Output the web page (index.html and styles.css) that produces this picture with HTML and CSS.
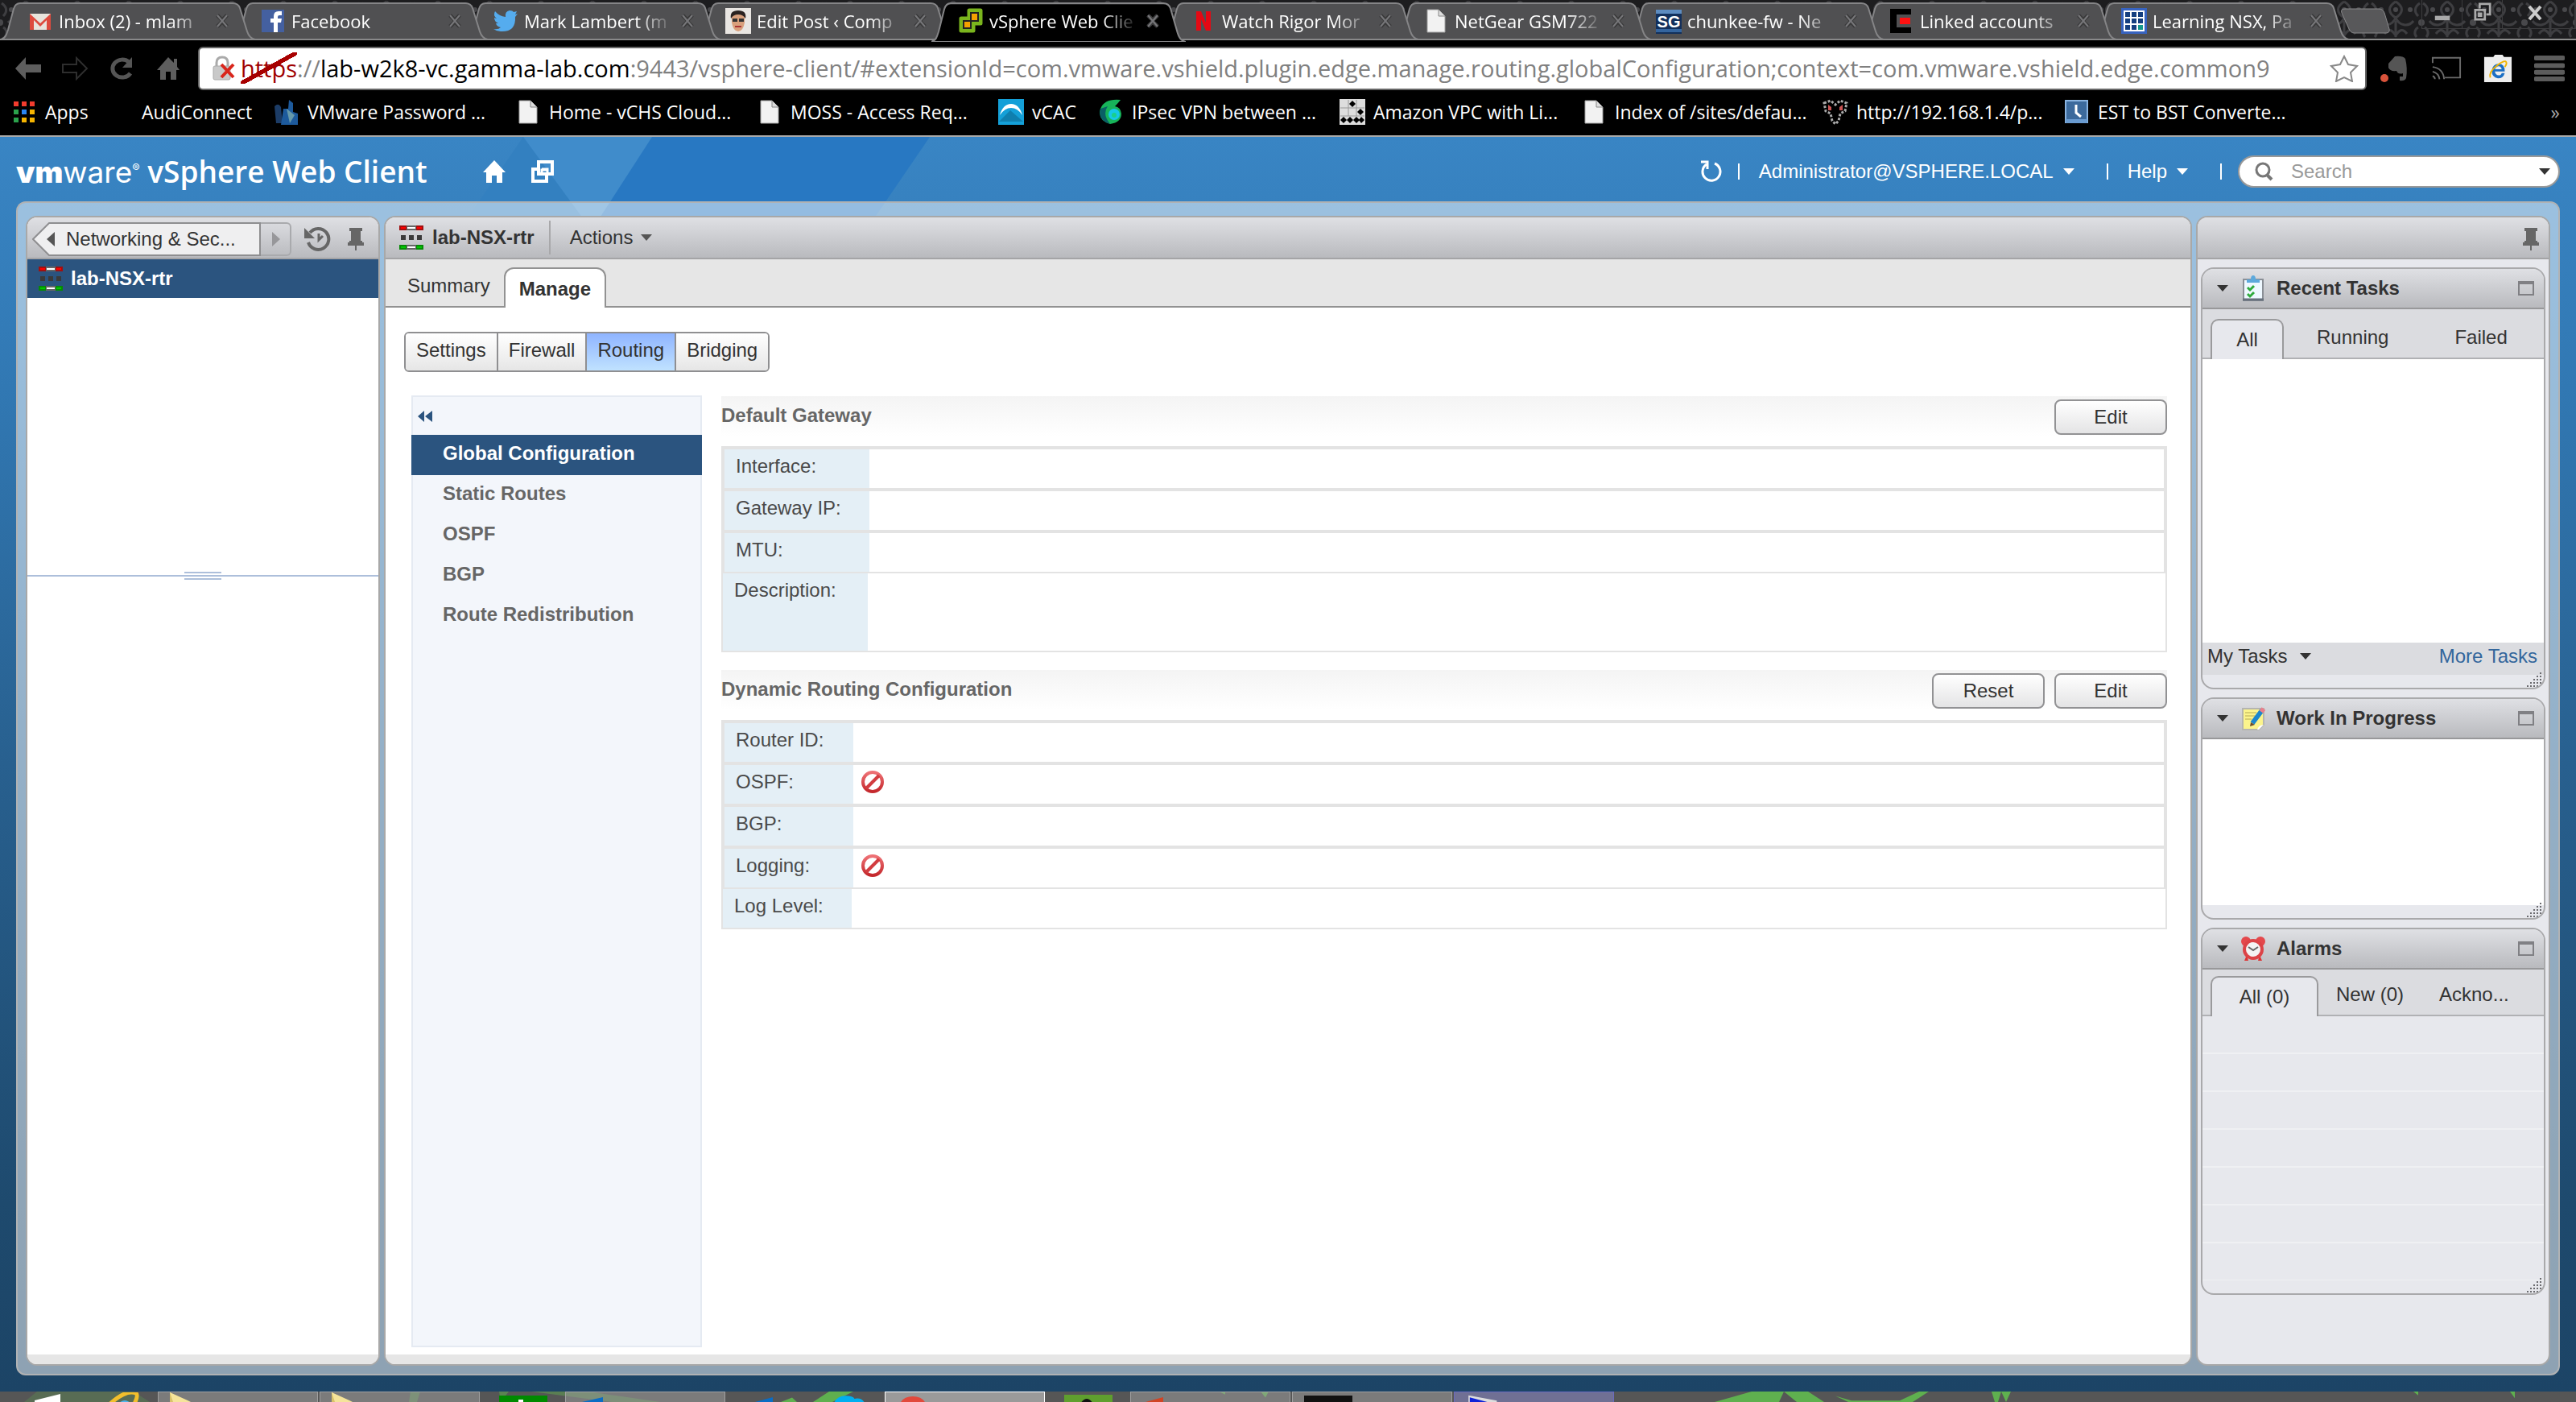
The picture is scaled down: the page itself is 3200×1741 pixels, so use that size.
FILE: index.html
```html
<!DOCTYPE html>
<html lang="en">
<head>
    <meta charset="UTF-8">
    <meta name="viewport" content="width=device-width, initial-scale=1.0">
    <title>vSphere Web Client</title>
    <link rel="stylesheet" href="styles.css">
</head>
<body>
    <!-- shared icons -->
    <svg class="sprite" width="0" height="0" aria-hidden="true">
        <defs>
            <linearGradient id="noGrad" x1="0" y1="0" x2="0" y2="1">
                <stop offset="0" stop-color="#ee7175"/>
                <stop offset="1" stop-color="#c4282c"/>
            </linearGradient>
            <pattern id="damask" width="64" height="48" patternUnits="userSpaceOnUse">
                <rect width="64" height="48" fill="#1d1d1f"/>
                <g fill="none" stroke="#3e3e41" stroke-width="3">
                    <path d="M32 2c10 6 10 14 0 20c-10-6-10-14 0-20M32 22c-4 10-16 12-22 4M32 22c4 10 16 12 22 4M32 26v20M18 42c6-8 10-4 14 2c4-6 8-10 14-2"/>
                    <path d="M2 4c6 4 8 10 2 16M62 4c-6 4-8 10-2 16M4 34c4 2 6 8 2 12M60 34c-4 2-6 8-2 12"/>
                </g>
                <g fill="#48484b"><circle cx="32" cy="12" r="3"/><circle cx="14" cy="12" r="3"/><circle cx="50" cy="12" r="3"/><circle cx="0" cy="28" r="4"/><circle cx="64" cy="28" r="4"/></g>
            </pattern>
        </defs>
        <symbol id="tab-shape" viewBox="0 0 316 46" preserveAspectRatio="none">
            <path d="M0 46C6 44 7 40 9 34L16 8Q18 1 24 1H288Q295 1 297 7L306 36Q309 45 316 46Z"/>
        </symbol>
        <symbol id="close" viewBox="0 0 18 18"><path d="M3 2L9 8L15 2M3 16L9 10L15 16M9 8v2" fill="none" stroke="#3a3a3b" stroke-width="5"/><path d="M3 2L15 16M15 2L3 16" stroke="#77777a" stroke-width="2"/></symbol>
        <symbol id="page" viewBox="0 0 32 32"><path d="M5 2h14l8 8v20H5z" fill="#f2f2f2" stroke="#a0a0a0"/><path d="M19 2v8h8" fill="#ddd" stroke="#888"/></symbol>
        <symbol id="caret" viewBox="0 0 14 10"><path d="M0 1h14L7 9z" fill="currentColor"/></symbol>
        <symbol id="pin" viewBox="0 0 20 28"><path d="M2 0h16v4h-2v12h2v2h2v4H0v-4h2v-2h2V4H2z"/><path d="M9 22h2v6H9z"/></symbol>
        <symbol id="router" viewBox="0 0 30 30">
            <path d="M0 0h30v6H0z" fill="#a01010"/><path d="M2 2h6v2H2zM22 2h6v2h-6z" fill="#f00"/><path d="M9 0h12v6H9z" fill="#666"/><path d="M10 2h10v2H10z" fill="#fff"/>
            <path d="M2 12h6v6H2zM12 12h6v6h-6zM22 12h6v6h-6z" fill="#3a3a3a"/>
            <path d="M0 24h30v6H0z" fill="#078a07"/><path d="M2 26h6v2H2zM22 26h6v2h-6z" fill="#0c0"/><path d="M9 24h12v6H9z" fill="#666"/><path d="M10 26h10v2H10z" fill="#fff"/>
        </symbol>
        <symbol id="maximize" viewBox="0 0 20 18"><path d="M0 0h20v18H0zM2 4v12h16V4z" fill="#808084" fill-rule="evenodd"/></symbol>
        <symbol id="disabled" viewBox="0 0 28 28"><circle cx="14" cy="14" r="12" fill="#fff" stroke="url(#noGrad)" stroke-width="4"/><path d="M6 22L22 6" stroke="#d23c40" stroke-width="4"/></symbol>
        <symbol id="grip" viewBox="0 0 20 20"><path d="M18 2v2M14 6v2M18 6v2M10 10v2M14 10v2M18 10v2M6 14v2M10 14v2M14 14v2M18 14v2M2 18v2M6 18v2M10 18v2M14 18v2M18 18v2" stroke="#6a6a6e" stroke-width="2"/></symbol>
        <symbol id="folder" viewBox="0 0 40 14"><path d="M0 0l22 10l16 8v6H0z" fill="#f5e49a"/><path d="M0 0v24h8z" fill="#d9c26a"/></symbol>
    </svg>

    <!-- browser tabs -->
    <div class="tab-strip">
        <svg class="damask" aria-hidden="true"><rect width="100%" height="100%" fill="url(#damask)"/></svg>
        <nav class="tabs" aria-label="Browser tabs">
            <a class="tab" href="#"><svg class="shape"><use href="#tab-shape"/></svg>
                <svg class="fav" viewBox="0 0 32 32"><path d="M3 7h26v20H3z" fill="#e8e4dc"/><path d="M3 27V7l13 12L29 7v20h-5V15l-8 8l-8-8v12z" fill="#dd4b3e"/></svg>
                <span class="label">Inbox (2) - mlam</span><svg class="x"><use href="#close"/></svg></a>
            <a class="tab" href="#"><svg class="shape"><use href="#tab-shape"/></svg>
                <svg class="fav" viewBox="0 0 32 32"><path d="M2 2h28v28H2z" fill="#4460a0"/><path d="M17 30V18h-4v-5h4v-3q0-6 6-6h4v5h-3q-2 0-2 2v2h5l-1 5h-4v12z" fill="#fff"/></svg>
                <span class="label">Facebook</span><svg class="x"><use href="#close"/></svg></a>
            <a class="tab" href="#"><svg class="shape"><use href="#tab-shape"/></svg>
                <svg class="fav" viewBox="0 0 32 32"><path d="M1 26q6 1 9-2q-5-1-6-5h3q-5-2-5-7l3 1Q0 9 3 4q5 6 13 7q-1-7 5-8q4 0 5 2l4-1l-2 4l3-1l-3 4Q29 30 10 29q-5 0-9-3" fill="#55acee"/></svg>
                <span class="label">Mark Lambert (m</span><svg class="x"><use href="#close"/></svg></a>
            <a class="tab" href="#"><svg class="shape"><use href="#tab-shape"/></svg>
                <svg class="fav" viewBox="0 0 32 32"><path d="M0 0h32v32H0z" fill="#e9e6e2"/><path d="M8 8q8-8 16 0v10q-2 11-8 11T8 18z" fill="#d9a07c"/><path d="M7 13Q5 3 16 3t9 10q-3-5-9-5t-9 5" fill="#2a2220"/><path d="M9 13h6v4H9zM17 13h6v4h-6z" fill="#333"/><path d="M12 23h8" stroke="#a33" stroke-width="2"/></svg>
                <span class="label">Edit Post ‹ Comp</span><svg class="x"><use href="#close"/></svg></a>
            <a class="tab active" href="#" aria-current="page"><svg class="shape"><use href="#tab-shape"/></svg>
                <svg class="fav" viewBox="0 0 32 32"><path d="M14 3h14v16h-9v9H4V13h10z" fill="none" stroke="#7ab51d" stroke-width="5" stroke-linejoin="round"/><path d="M15 5h11v12H15zM6 15h11v11H6z" fill="#222"/><path d="M17 7h7v8h-7zM8 17h7v7H8z" fill="#f5a100"/></svg>
                <span class="label">vSphere Web Clie</span><svg class="x"><use href="#close"/></svg></a>
            <a class="tab" href="#"><svg class="shape"><use href="#tab-shape"/></svg>
                <svg class="fav" viewBox="0 0 32 32"><path d="M7 4h6l6 14V4h6v24h-6l-6-14v14H7z" fill="#e50914"/></svg>
                <span class="label">Watch Rigor Mor</span><svg class="x"><use href="#close"/></svg></a>
            <a class="tab" href="#"><svg class="shape"><use href="#tab-shape"/></svg>
                <svg class="fav"><use href="#page"/></svg>
                <span class="label">NetGear GSM722</span><svg class="x"><use href="#close"/></svg></a>
            <a class="tab" href="#"><svg class="shape"><use href="#tab-shape"/></svg>
                <svg class="fav" viewBox="0 0 32 32"><path d="M0 2h32v30H0z" fill="#12305c"/><path d="M0 2h32v5H0z" fill="#5d8cc0"/><path d="M0 26h32v4H0z" fill="#34659f"/><text x="16" y="24" class="fav-text">SG</text></svg>
                <span class="label">chunkee-fw - Ne</span><svg class="x"><use href="#close"/></svg></a>
            <a class="tab" href="#"><svg class="shape"><use href="#tab-shape"/></svg>
                <svg class="fav" viewBox="0 0 32 32"><path d="M2 1h26v7H10v16h18v7H2z" fill="#000"/><path d="M14 12h13v8H14z" fill="#f11"/></svg>
                <span class="label">Linked accounts</span><svg class="x"><use href="#close"/></svg></a>
            <a class="tab" href="#"><svg class="shape"><use href="#tab-shape"/></svg>
                <svg class="fav" viewBox="0 0 32 32"><path d="M0 0h32v32H0z" fill="#3763c0"/><path d="M3 3h26v26H3z" fill="#fff"/><path d="M5 5h6v6H5zM13 5h6v6h-6zM21 5h6v6h-6zM5 13h6v6H5zM13 13h6v6h-6zM21 13h6v6h-6zM5 21h6v6H5zM13 21h6v6h-6z" fill="#153f80"/><path d="M21 21h6v6h-6z" fill="#159a8c"/></svg>
                <span class="label">Learning NSX, Pa</span><svg class="x"><use href="#close"/></svg></a>
        </nav>
        <button class="new-tab" aria-label="New tab"><svg viewBox="0 0 62 32"><path d="M6 1h42q5 0 7 5l6 20q1 5-4 5H18q-5 0-7-5L2 6q-2-5 4-5z" fill="#58585a" stroke="#8a8a8c"/></svg></button>
        <div class="window-controls">
            <button aria-label="Minimize"><svg viewBox="0 0 22 26"><path d="M1 18h20v6H1z" fill="#aaa"/></svg></button>
            <button aria-label="Restore"><svg viewBox="0 0 24 26"><path d="M8 8V2h14v14h-5M2 10h13v13H2zM7 15h3v3H7z" fill="none" stroke="#aaa" stroke-width="3"/></svg></button>
            <button class="wide" aria-label="Close"><svg viewBox="0 0 18 20"><path d="M2 2l14 16M16 2L2 18" stroke="#ccc" stroke-width="4"/></svg></button>
        </div>
    </div>

    <!-- address bar -->
    <div class="toolbar">
        <div class="nav-buttons">
            <button aria-label="Back"><svg viewBox="0 0 34 30"><path d="M14 1L1 15l13 14v-9h19V10H14z" fill="#5e5e5e"/></svg></button>
            <button aria-label="Forward"><svg viewBox="0 0 34 30"><path d="M19 2l13 13l-13 13v-8H2V10h17z" fill="none" stroke="#2e2e2e" stroke-width="2"/></svg></button>
            <button aria-label="Reload"><svg viewBox="0 0 30 30"><path d="M24 7A12 11 0 1 0 26 21" fill="none" stroke="#555" stroke-width="5"/><path d="M28 1v13H16z" fill="#555"/></svg></button>
            <button aria-label="Home"><svg viewBox="0 0 30 30"><path d="M15 1L1 17h4v12h7V19h6v10h7V17h4l-3-4V3h-4v5z" fill="#5e5e5e"/></svg></button>
        </div>
        <div class="omnibox">
            <svg class="lock" viewBox="0 0 32 32"><path d="M7 14V9q0-7 7-7t7 7v5" fill="none" stroke="#aaa" stroke-width="3"/><rect x="3" y="13" width="21" height="17" rx="2" fill="#c9c9c9" stroke="#aaa"/><path d="M13 11l15 16M28 11L13 27" stroke="#d9261c" stroke-width="4"/></svg>
            <div class="url" role="textbox" aria-label="Address" contenteditable="true" spellcheck="false"><span class="scheme">https</span>://<span class="host">lab-w2k8-vc.gamma-lab.com</span>:9443/vsphere-client/#extensionId=com.vmware.vshield.plugin.edge.manage.routing.globalConfiguration;context=com.vmware.vshield.edge.common9</div>
            <button class="star" aria-label="Bookmark this page"><svg viewBox="0 0 36 34"><path d="M18 2l5 10l11 2l-8 8l2 11l-10-5l-10 5l2-11l-8-8l11-2z" fill="#fff" stroke="#888" stroke-width="2"/></svg></button>
        </div>
        <div class="extensions">
            <button aria-label="Evernote"><svg viewBox="0 0 36 36"><path d="M10 12l8-9q10-1 13 3q3 12 1 24q-2 4-8 3v-5h4v-4q-6 2-8-3q-8 1-10-4z" fill="#555"/><circle cx="5" cy="30" r="5" fill="#d9533b"/></svg></button>
            <button aria-label="Cast"><svg viewBox="0 0 40 32"><path d="M2 9V2h36v26H18M2 14q14 2 15 16M2 20q8 2 9 10M2 26q3 1 3 4" fill="none" stroke="#6a6a6a" stroke-width="2"/></svg></button>
            <button aria-label="IE Tab"><svg viewBox="0 0 38 38"><path d="M1 4h12l2-3h10l2 3h10v33H1z" fill="#eee"/><path d="M28 23H15q1 5 5 5q3 0 4-3h4q-2 7-9 7q-8-1-8-10q1-9 9-9t8 10zm-4-3q-1-4-4-4t-5 4z" fill="#1c6fc4"/><path d="M9 31q-2-8 9-16t12-4q1 2-2 6" fill="none" stroke="#f0b400" stroke-width="2"/></svg></button>
            <button aria-label="Menu"><svg viewBox="0 0 32 28"><path d="M2 3h28M2 11h28M2 18h28M2 25h28" stroke="#5c5c5c" stroke-width="5" stroke-linecap="round"/></svg></button>
        </div>
    </div>

    <!-- bookmarks -->
    <nav class="bookmarks" aria-label="Bookmarks">
        <a class="apps" href="#"><svg viewBox="0 0 32 32"><path d="M3 3h6v6H3zM13 3h6v6h-6zM23 3h6v6h-6z" fill="#f33c2e"/><path d="M3 13h6v6H3zM3 23h6v6H3z" fill="#2ba24c"/><path d="M13 13h6v6h-6z" fill="#2a86f3"/><path d="M23 13h6v6h-6zM13 23h6v6h-6zM23 23h6v6h-6z" fill="#f5b400"/></svg>Apps</a>
        <a class="audi" href="#"><svg viewBox="0 0 32 32"></svg>AudiConnect</a>
        <a href="#"><svg viewBox="0 0 32 32"><path d="M1 9q5-5 8 1l2 20H3z" fill="#1c3c66"/><path d="M12 12h6l1-11l5 4v11l6 2v14H9z" fill="#1d5a9c"/><path d="M16 12l4 18l6-10z" fill="#69a"/></svg>VMware Password ...</a>
        <a href="#"><svg><use href="#page"/></svg>Home - vCHS Cloud...</a>
        <a href="#"><svg><use href="#page"/></svg>MOSS - Access Req...</a>
        <a class="short" href="#"><svg viewBox="0 0 32 32"><path d="M0 0h32v32H0z" fill="#14a0d8"/><path d="M2 20Q6 6 16 6t14 14q-6-9-14-9T2 20" fill="#fff"/><path d="M1 28l14-14l16 14z" fill="#0f7fae"/></svg>vCAC</a>
        <a href="#"><svg viewBox="0 0 32 32"><path d="M28 1Q8-1 3 12q-4 14 12 19q14-2 14-13q-1-8-8-9q4-4 7-8z" fill="#17b45a"/><path d="M3 12q-4 14 12 19q-10-12-3-22z" fill="#0a5f66"/><circle cx="20" cy="19" r="7" fill="#15c8e8"/><circle cx="20" cy="20" r="3" fill="#1ad08a"/></svg>IPsec VPN between ...</a>
        <a href="#"><svg viewBox="0 0 32 32"><path d="M0 0h32v32H0z" fill="#ddd"/><path d="M1 11h30M1 21h30M11 1v20M21 1v20" stroke="#999"/><path d="M12 6l4-4l4 4l-4 4zM22 16l4-4l4 4l-4 4zM1 26l4-4l4 4l-4 4zM9 26l4-4l4 4l-4 4zM17 26l4-4l4 4l-4 4zM24 26l3-4l4 4l-4 4z" fill="#000"/></svg>Amazon VPC with Li...</a>
        <a href="#"><svg><use href="#page"/></svg>Index of /sites/defau...</a>
        <a href="#"><svg viewBox="0 0 32 32"><path d="M2 5l8-3l6 5l6-5l8 3l-2 10l-6 3l-2 9l-4 4l-4-4l-2-9l-6-3z" fill="none" stroke="#aaa" stroke-width="3" stroke-dasharray="3 2"/><path d="M7 7l4 3v4H7zM25 7l-4 3v4h4z" fill="#c55"/></svg>http://192.168.1.4/p...</a>
        <a href="#"><svg viewBox="0 0 32 32"><path d="M2 2h27v27H2z" fill="#3c6a9c" stroke="#8ab4e0" stroke-width="2"/><path d="M2 25h27v5H2z" fill="#6a9bd0"/><path d="M15 7v10l6 5" fill="none" stroke="#fff" stroke-width="3"/></svg>EST to BST Converte...</a>
        <button class="overflow" aria-label="More bookmarks">»</button>
    </nav>

    <!-- web client -->
    <div class="client">
        <svg class="facets" viewBox="0 0 1160 120" aria-hidden="true">
            <path d="M810 0H1155L1073 120H590L650 0z" fill="#2878c2"/>
            <path d="M650 0L568 120H743L650 0z" fill="#3380c0"/>
            <path d="M650 0H810L735 116z" fill="#408ccb"/>
        </svg>
        <header class="client-header">
            <h1 class="brand"><span class="vm"><b>vm</b>ware<sup>®</sup></span> vSphere Web Client</h1>
            <button class="hicon home" aria-label="Home"><svg viewBox="0 0 28 28"><path d="M14 0L0 15h4v13h7v-9h6v9h7V15h4z"/></svg></button>
            <button class="hicon" aria-label="Navigator"><svg viewBox="0 0 28 28"><path d="M9 2h17v15H9zM19 17v9H2V11h7" fill="none" stroke="#fff" stroke-width="4"/><path d="M13 18v-6h7M13 11l7 0v6" fill="none" stroke="#fff" stroke-width="3"/></svg></button>
            <div class="user-menu">
                <button class="hicon refresh" aria-label="Refresh"><svg viewBox="0 0 28 28"><path d="M9 5A11 11 0 1 0 19 4" fill="none" stroke="#fff" stroke-width="3"/><path d="M2 2h8v9" fill="none" stroke="#fff" stroke-width="3"/></svg></button>
                <span class="bar"></span>
                <button>Administrator@VSPHERE.LOCAL<svg class="caret"><use href="#caret"/></svg></button>
                <span class="bar"></span>
                <button>Help<svg class="caret"><use href="#caret"/></svg></button>
                <span class="bar"></span>
                <label class="search">
                    <svg class="lens" viewBox="0 0 24 24"><circle cx="11" cy="10" r="8" fill="none" stroke="#777" stroke-width="3"/><path d="M16 16l6 6" stroke="#777" stroke-width="4"/></svg>
                    <input type="text" placeholder="Search" aria-label="Search">
                    <svg class="caret"><use href="#caret"/></svg>
                </label>
            </div>
        </header>

        <div class="workspace">
            <aside class="panel navigator">
                <div class="panel-head">
                    <div class="crumbs">
                        <button class="crumb">
                            <svg class="crumb-shape" viewBox="0 0 284 40" preserveAspectRatio="none"><path d="M21 1H283V39H21L1 20z" fill="#efeff0" stroke="#8e8e90" stroke-width="2"/></svg>
                            <svg class="back" viewBox="0 0 10 18"><path d="M10 0v18L0 9z" fill="#555"/></svg>
                            <span>Networking &amp; Sec...</span>
                        </button>
                        <button class="crumb-next" aria-label="Forward"><svg viewBox="0 0 10 18"><path d="M0 0v18l10-9z" fill="#97979a"/></svg></button>
                    </div>
                    <button class="tool" aria-label="History"><svg class="history" viewBox="0 0 34 32"><path d="M7 8A13 13 0 1 1 5 20" fill="none" stroke="#666" stroke-width="4"/><path d="M0 2v13h13z" fill="#666"/><path d="M18 9v8l5-5" fill="none" stroke="#666" stroke-width="3"/></svg></button>
                    <button class="tool" aria-label="Pin"><svg class="pin"><use href="#pin"/></svg></button>
                </div>
                <a class="nav-item" href="#"><svg class="router"><use href="#router"/></svg>lab-NSX-rtr</a>
                <div class="nav-body"></div>
                <div class="splitter"><span></span></div>
                <div class="nav-lower"></div>
                <div class="panel-foot"></div>
            </aside>

            <main class="panel detail">
                <div class="panel-head">
                    <svg class="router"><use href="#router"/></svg>
                    <h2>lab-NSX-rtr</h2>
                    <button class="actions">Actions<svg class="caret"><use href="#caret"/></svg></button>
                </div>
                <nav class="object-tabs">
                    <a href="#">Summary</a>
                    <a class="current" href="#" aria-current="page">Manage</a>
                </nav>
                <div class="manage">
                    <div class="segments">
                        <button>Settings</button><button>Firewall</button><button class="on">Routing</button><button>Bridging</button>
                    </div>
                    <div class="routing">
                        <nav class="toc">
                            <button class="collapse" aria-label="Collapse"><svg viewBox="0 0 18 14"><path d="M8 0v14L0 7zM18 0v14L9 7z" fill="#2b547f"/></svg></button>
                            <a class="current" href="#">Global Configuration</a>
                            <a href="#">Static Routes</a>
                            <a href="#">OSPF</a>
                            <a href="#">BGP</a>
                            <a href="#">Route Redistribution</a>
                        </nav>
                        <div class="config">
                            <section>
                                <div class="section-head"><h3>Default Gateway</h3><button>Edit</button></div>
                                <table class="props gateway">
                                    <tr><th scope="row">Interface:</th><td></td></tr>
                                    <tr><th scope="row">Gateway IP:</th><td></td></tr>
                                    <tr><th scope="row">MTU:</th><td></td></tr>
                                    <tr class="tall"><th scope="row">Description:</th><td></td></tr>
                                </table>
                            </section>
                            <section>
                                <div class="section-head"><h3>Dynamic Routing Configuration</h3><button>Reset</button><button>Edit</button></div>
                                <table class="props dynamic">
                                    <tr><th scope="row">Router ID:</th><td></td></tr>
                                    <tr><th scope="row">OSPF:</th><td><svg class="disabled" role="img" aria-label="Disabled"><use href="#disabled"/></svg></td></tr>
                                    <tr><th scope="row">BGP:</th><td></td></tr>
                                    <tr><th scope="row">Logging:</th><td><svg class="disabled" role="img" aria-label="Disabled"><use href="#disabled"/></svg></td></tr>
                                    <tr><th scope="row">Log Level:</th><td></td></tr>
                                </table>
                            </section>
                        </div>
                    </div>
                </div>
                <div class="panel-foot"></div>
            </main>

            <aside class="panel sidebar">
                <div class="panel-head"><button class="tool" aria-label="Pin"><svg class="pin"><use href="#pin"/></svg></button></div>
                <div class="portlets">
                    <section class="portlet tasks">
                        <div class="portlet-head">
                            <svg class="caret"><use href="#caret"/></svg>
                            <svg class="pic" viewBox="0 0 30 32"><path d="M3 5h24v26H3z" fill="#eef8ff" stroke="#8a8f96" stroke-width="2"/><path d="M2 30h26" stroke="#66707c" stroke-width="3"/><path d="M7 9V5h5q0-5 3-5t3 5h5v4z" fill="#5da9dc"/><path d="M8 15l3 3l5-5M8 23l3 3l5-5" fill="none" stroke="#2eaa3c" stroke-width="3"/></svg>
                            <h3>Recent Tasks</h3>
                            <button aria-label="Maximize"><svg><use href="#maximize"/></svg></button>
                        </div>
                        <div class="portlet-tabs"><button class="on">All</button><button>Running</button><button>Failed</button></div>
                        <div class="list"></div>
                        <div class="task-filter">
                            <label><select aria-label="Task filter"><option>My Tasks</option></select><svg class="caret"><use href="#caret"/></svg></label>
                            <a href="#">More Tasks</a>
                        </div>
                        <div class="portlet-foot"><svg class="grip"><use href="#grip"/></svg></div>
                    </section>
                    <section class="portlet work">
                        <div class="portlet-head">
                            <svg class="caret"><use href="#caret"/></svg>
                            <svg class="pic" viewBox="0 0 30 32"><path d="M2 4h26v20l-6 6H2z" fill="#fbf48c" stroke="#b5b5b0" stroke-width="2"/><path d="M5 9h14M5 13h12M5 17h8" stroke="#d8cf70" stroke-width="2"/><path d="M14 22l12-16" stroke="#1a86cc" stroke-width="6"/><path d="M25 8l3-4" stroke="#e8808c" stroke-width="6"/><path d="M11 26l1-5l5 3z" fill="#6b4a2a"/><path d="M20 30q2-6 8-6l-6 6z" fill="#fff"/></svg>
                            <h3>Work In Progress</h3>
                            <button aria-label="Maximize"><svg><use href="#maximize"/></svg></button>
                        </div>
                        <div class="list"></div>
                        <div class="portlet-foot"><svg class="grip"><use href="#grip"/></svg></div>
                    </section>
                    <section class="portlet alarms">
                        <div class="portlet-head">
                            <svg class="caret"><use href="#caret"/></svg>
                            <svg class="pic" viewBox="0 0 30 32"><path d="M7 24l-3 7h5zM23 24l3 7h-5z" fill="#d33"/><circle cx="6" cy="7" r="6" fill="#e4484c"/><circle cx="24" cy="7" r="6" fill="#e4484c"/><circle cx="15" cy="17" r="11" fill="#f4f4f4" stroke="#dc4347" stroke-width="4"/><path d="M9 14l6 4l6-4" fill="none" stroke="#666" stroke-width="2"/></svg>
                            <h3>Alarms</h3>
                            <button aria-label="Maximize"><svg><use href="#maximize"/></svg></button>
                        </div>
                        <div class="portlet-tabs"><button class="on">All (0)</button><button>New (0)</button><button>Ackno...</button></div>
                        <div class="list"></div>
                        <div class="portlet-foot"><svg class="grip"><use href="#grip"/></svg></div>
                    </section>
                </div>
            </aside>
        </div>
    </div>

    <!-- top edge of the OS taskbar -->
    <div class="taskbar">
        <svg class="wallpaper" viewBox="0 0 3200 14" preserveAspectRatio="none" aria-hidden="true">
            <g fill="#5fb04f">
                <path d="M30 14l16-14h120l20 14z" opacity=".25"/><path d="M510 0h12l-4 14h-10zM620 0h12l-10 14z" opacity=".5"/>
                <path d="M660 0h70l90 14h-60z" opacity=".45"/><path d="M970 14l14-6l6 6zM1010 14l20-14h30l-26 14z"/>
                <path d="M1514 0h8v4zM1566 0h10l-4 8z"/><path d="M2130 14l46-14h40l-6 14zM2216 0h30l20 14h-34zM2280 6l20 6h60l24-12h12l-20 14h-80z"/>
                <path d="M2474 0h12l-4 14h-4zM2486 0h12l-6 14zM2998 0h6v5zM3118 0h6v9z"/>
            </g>
        </svg>
        <button class="task plain" aria-label="Start"><svg viewBox="0 0 40 14"><path d="M8 10l32-8v12H8z" fill="#fff"/></svg></button>
        <button class="task plain" aria-label="Internet Explorer"><svg viewBox="0 0 40 14"><path d="M4 14Q24-4 36 1q3 3-2 13" fill="none" stroke="#f2bf2c" stroke-width="5"/><path d="M14 14q8-8 16 0z" fill="#4db4ec"/></svg></button>
        <button class="task" aria-label="Folder"><svg><use href="#folder"/></svg></button>
        <button class="task" aria-label="Folder"><svg><use href="#folder"/></svg></button>
        <button class="task plain store" aria-label="Store"><svg viewBox="0 0 60 14"><path d="M0 4h60v10H0z" fill="#008a00"/><path d="M24 9h6v5h-6z" fill="#fff"/></svg></button>
        <button class="task" aria-label="Outlook"><svg viewBox="0 0 40 14"><path d="M6 12l26-6v8H6z" fill="#0a6cc4"/></svg></button>
        <button class="task plain" aria-label="Lync"><svg viewBox="0 0 40 14"><path d="M0 12l22-6v8H0z" fill="#0a6cc4"/></svg></button>
        <button class="task plain" aria-label="Skype"><svg viewBox="0 0 44 14"><path d="M0 14Q4 4 16 4q10 0 12 4q10-2 14 6z" fill="#00aff0"/></svg></button>
        <button class="task lit" aria-label="Chrome"><svg viewBox="0 0 40 14"><path d="M4 14Q8 5 20 5t16 9z" fill="#e2493c"/></svg></button>
        <button class="task plain store" aria-label="Evernote"><svg viewBox="0 0 60 14"><path d="M0 3h60v11H0z" fill="#5f9f2e"/><path d="M20 14q8-12 16 0z" fill="#111"/></svg></button>
        <button class="task" aria-label="PowerPoint"><svg viewBox="0 0 40 14"><path d="M4 12l22-6v8H4z" fill="#d14424"/></svg></button>
        <button class="task" aria-label="Terminal"><svg class="square" viewBox="0 0 60 14"><path d="M0 4h60v10H0z" fill="#111"/></svg></button>
        <button class="task violet" aria-label="Remote desktop"><svg viewBox="0 0 50 14"><path d="M4 3l44 8v3H4z" fill="#ddd"/><path d="M6 6l30 8H6z" fill="#1022d8"/></svg></button>
    </div>
</body>
</html>
```
FILE: styles.css
```css
* {
    margin: 0;
    padding: 0;
    box-sizing: border-box;
}

body {
    display: flex;
    flex-direction: column;
    height: 100vh;
    overflow: hidden;
    background: #000;
    color: #333;
    font-family: "Liberation Sans", Arial, sans-serif;
    font-size: 24px;
    line-height: 28px;
}

button,
input,
select {
    font: inherit;
    color: inherit;
    background: none;
    border: none;
}

button {
    cursor: pointer;
    white-space: nowrap;
}

svg {
    display: block;
    flex: none;
}

a {
    color: inherit;
    text-decoration: none;
}

.sprite {
    position: absolute;
}

.caret {
    width: 14px;
    height: 10px;
}

/* browser tab strip */
.tab-strip,
.toolbar,
.bookmarks {
    font-family: "Open Sans", "Noto Sans", sans-serif;
    color: #fff;
    flex: none;
}

.tab-strip {
    position: relative;
    display: flex;
    height: 50px;
    border-bottom: 2px solid #8d8d8d;
    background: #1d1d1f;
}

.damask {
    position: absolute;
    width: 100%;
    height: 100%;
}

.tabs {
    display: flex;
    padding: 3px 0 0 1px;
}

.tab {
    position: relative;
    display: flex;
    align-items: center;
    width: 316px;
    height: 46px;
    margin-right: -27px;
    padding: 0 32px 0 33px;
    font-size: 22px;
}

.tab .shape {
    position: absolute;
    left: 0;
    top: 0;
    width: 100%;
    height: 100%;
    fill: #505052;
    stroke: #858587;
    stroke-width: 2px;
}

.tab:nth-child(1) { z-index: 10; }
.tab:nth-child(2) { z-index: 9; }
.tab:nth-child(3) { z-index: 8; }
.tab:nth-child(4) { z-index: 7; }
.tab:nth-child(6) { z-index: 5; }
.tab:nth-child(7) { z-index: 4; }
.tab:nth-child(8) { z-index: 3; }
.tab:nth-child(9) { z-index: 2; }
.tab:nth-child(10) { z-index: 1; }

.tab.active {
    z-index: 11;
}

.tab.active .shape {
    height: 49px;
    fill: #000;
}

.tab .fav {
    position: relative;
    width: 32px;
    height: 32px;
}

.fav-text {
    fill: #fff;
    font: bold 20px "Liberation Sans", sans-serif;
    text-anchor: middle;
}

.tab .label {
    position: relative;
    flex: 1;
    margin: 0 8px 0 7px;
    white-space: nowrap;
    -webkit-mask-image: linear-gradient(to right, #000 75%, transparent);
    mask-image: linear-gradient(to right, #000 75%, transparent);
}

.tab .x {
    position: relative;
    width: 18px;
    height: 18px;
}

.new-tab {
    position: relative;
    width: 62px;
    height: 32px;
    margin: 10px 0 0 16px;
}

.window-controls {
    position: relative;
    display: flex;
    height: 36px;
    margin-left: auto;
    border: 1px solid #3c3c3e;
    border-top: none;
}

.window-controls button {
    display: flex;
    justify-content: center;
    width: 50px;
    padding-top: 3px;
    border-right: 1px solid #3c3c3e;
}

.window-controls .wide {
    width: 90px;
    padding: 6px 10px 0 0;
}

.window-controls svg {
    width: 22px;
    height: 24px;
}

.window-controls .wide svg {
    width: 18px;
    height: 20px;
}

/* address bar */
.toolbar {
    display: flex;
    align-items: center;
    gap: 16px;
    height: 70px;
    padding: 0 14px 0 18px;
}

.nav-buttons {
    display: flex;
    gap: 24px;
    margin-right: 4px;
}

.nav-buttons svg {
    width: 34px;
    height: 30px;
}

.omnibox {
    display: flex;
    align-items: center;
    flex: 1;
    min-width: 0;
    height: 54px;
    padding: 0 8px 0 14px;
    border: 2px solid #666;
    border-radius: 6px;
    background: #fff;
}

.lock {
    width: 32px;
    height: 32px;
}

.url {
    flex: 1;
    margin: 0 4px 0 5px;
    overflow: hidden;
    color: #808080;
    font-size: 29px;
    line-height: 44px;
    white-space: nowrap;
    outline: none;
}

.scheme {
    color: #a00000;
    background: linear-gradient(to bottom right, transparent 46%, #a80000 46%, #a80000 54%, transparent 54%);
}

.host {
    color: #000;
}

.star svg {
    width: 36px;
    height: 34px;
}

.extensions {
    display: flex;
    align-items: center;
    gap: 26px;
}

.extensions svg {
    width: 38px;
    height: 36px;
}

/* bookmarks bar */
.bookmarks {
    display: flex;
    align-items: center;
    height: 50px;
    padding: 0 20px 10px 14px;
    border-bottom: 2px solid #aaa;
    font-size: 23px;
}

.bookmarks a {
    display: flex;
    align-items: center;
    gap: 10px;
    width: 300px;
    white-space: nowrap;
}

.bookmarks .apps {
    width: 122px;
}

.bookmarks .audi {
    width: 204px;
    gap: 8px;
}

.bookmarks .short {
    width: 124px;
}

.bookmarks a svg {
    width: 32px;
    height: 32px;
}

.overflow {
    margin-left: auto;
    color: #aaa;
}

/* web client shell */
.client {
    position: relative;
    display: flex;
    flex-direction: column;
    flex: 1;
    min-height: 0;
    padding: 0 20px 20px;
    background: linear-gradient(#3985c4, #3178b3 20%, #28608f 50%, #1e4a6e 85%, #1c4466);
}

.facets {
    position: absolute;
    left: 0;
    top: 0;
    width: 1160px;
    height: 120px;
}

.client-header {
    position: relative;
    display: flex;
    align-items: center;
    height: 80px;
    padding-top: 6px;
    color: #fff;
    flex: none;
}

.brand {
    width: 580px;
    font-family: "Open Sans", "Noto Sans", sans-serif;
    font-size: 37px;
    font-weight: 600;
    line-height: 44px;
    white-space: nowrap;
}

.vm {
    font-family: "Inter", sans-serif;
    font-weight: 400;
}

.vm b {
    font-weight: 900;
}

.vm sup {
    font-size: 14px;
    line-height: 14px;
}

.hicon svg {
    width: 28px;
    height: 28px;
    fill: #fff;
}

.home {
    margin-right: 32px;
}

.user-menu {
    display: flex;
    align-items: center;
    gap: 24px;
    margin-left: auto;
}

.user-menu button {
    display: flex;
    align-items: center;
    gap: 12px;
}

.user-menu .bar {
    width: 2px;
    height: 20px;
    margin-left: 16px;
    background: #fff;
}

.user-menu .refresh + .bar {
    margin-left: -4px;
}

.search {
    display: flex;
    align-items: center;
    gap: 22px;
    width: 400px;
    height: 40px;
    margin-left: -4px;
    padding: 0 10px 0 18px;
    border: 2px solid #999;
    border-radius: 20px;
    background: #fff;
    color: #333;
}

.search .lens {
    width: 24px;
    height: 24px;
}

.search input {
    flex: 1;
    min-width: 0;
    outline: none;
}

.search input::placeholder {
    color: #999;
    opacity: 1;
}

.workspace {
    position: relative;
    display: flex;
    gap: 5px;
    flex: 1;
    min-height: 0;
    padding: 16px 10px 10px;
    border: 2px solid #b0b2b4;
    border-radius: 12px;
    background: rgba(255, 255, 255, 0.5);
}

/* panels */
.panel {
    display: flex;
    flex-direction: column;
    min-height: 0;
    overflow: hidden;
    border: 2px solid #a8a8a8;
    border-radius: 14px;
    background: #fff;
}

.panel-head {
    display: flex;
    align-items: center;
    flex: none;
    height: 52px;
    border-bottom: 2px solid #a4a4a6;
    background: linear-gradient(#dfe0e4, #b9babe);
}

.panel-foot {
    flex: none;
    height: 12px;
    background: #e6e6e6;
}

.router {
    width: 30px;
    height: 30px;
}

.tool {
    padding: 0 10px;
}

.history {
    width: 34px;
    height: 32px;
}

.pin {
    width: 20px;
    height: 28px;
    fill: #666;
}

/* navigator */
.navigator {
    flex: none;
    width: 440px;
}

.navigator .panel-head,
.sidebar .panel-head {
    padding: 4px 8px 0 6px;
}

.crumbs {
    display: flex;
    height: 42px;
    margin-right: auto;
}

.crumb {
    position: relative;
    display: flex;
    align-items: center;
    gap: 14px;
    width: 284px;
    padding-left: 18px;
}

.crumb-shape {
    position: absolute;
    left: 0;
    top: 0;
    width: 100%;
    height: 100%;
}

.crumb .back,
.crumb span {
    position: relative;
}

.back,
.crumb-next svg {
    width: 10px;
    height: 18px;
}

.crumb-next {
    width: 38px;
    padding-left: 14px;
    border: 2px solid #a9aaad;
    border-left: none;
    border-radius: 0 6px 6px 0;
}

.nav-item {
    display: flex;
    align-items: center;
    gap: 10px;
    height: 48px;
    padding-left: 14px;
    background: #2b547f;
    color: #fff;
    font-weight: bold;
}

.nav-body {
    height: 344px;
}

.splitter {
    display: flex;
    align-items: center;
    justify-content: center;
    height: 2px;
    background: #adbfdb;
}

.splitter span {
    width: 46px;
    height: 10px;
    flex: none;
    border: solid #adbfdb;
    border-width: 2px 0;
}

.nav-lower {
    flex: 1;
}

/* detail */
.detail {
    flex: 1;
    min-width: 0;
}

.detail .panel-head {
    padding-left: 17px;
}

.detail h2 {
    margin-left: 11px;
    font-size: 24px;
}

.actions {
    display: flex;
    align-items: center;
    gap: 10px;
    height: 42px;
    margin-left: 18px;
    padding-left: 24px;
    border-left: 2px solid #a8a8aa;
}

.actions .caret {
    color: #555;
}

.object-tabs {
    display: flex;
    align-items: flex-end;
    flex: none;
    height: 60px;
    background: #e6e6e6;
    border-bottom: 2px solid #929292;
}

.object-tabs a {
    padding: 0 17px 11px 27px;
}

.object-tabs .current {
    height: 50px;
    margin-bottom: -2px;
    padding: 11px 17px 0;
    border: 2px solid #929292;
    border-bottom: none;
    border-radius: 12px 12px 0 0;
    background: #fff;
    font-weight: bold;
}

.manage {
    display: flex;
    flex-direction: column;
    flex: 1;
    padding: 30px 29px 9px 23px;
}

.segments {
    display: flex;
    align-self: flex-start;
    height: 50px;
    overflow: hidden;
    border: 2px solid #8f8f91;
    border-radius: 6px;
}

.segments button {
    padding: 0 13px 4px;
    background: linear-gradient(#fff, #e6e6e6);
}

.segments button + button {
    border-left: 2px solid #8f8f91;
}

.segments .on {
    background: linear-gradient(#8fb4ff, #c0e2ff);
}

.routing {
    display: flex;
    gap: 24px;
    flex: 1;
    padding: 29px 0 0 9px;
}

.toc {
    width: 361px;
    flex: none;
    border: 2px solid #e5eaf2;
    background: #f3f6fb;
}

.toc .collapse {
    display: flex;
    align-items: center;
    height: 47px;
    padding-left: 6px;
}

.collapse svg {
    width: 18px;
    height: 14px;
}

.toc a {
    display: block;
    height: 50px;
    margin: 0 -2px;
    padding: 9px 0 0 39px;
    color: #666;
    font-weight: bold;
}

.toc .current {
    background: #2b547f;
    color: #fff;
}

.config {
    flex: 1;
}

.section-head {
    display: flex;
    align-items: flex-start;
    gap: 12px;
    height: 62px;
    margin-top: 1px;
    padding-top: 4px;
    background: linear-gradient(#f4f4f4, #fff 50px);
}

.section-head h3 {
    flex: 1;
    padding-top: 6px;
    color: #666;
    font-size: 24px;
}

.section-head button {
    width: 140px;
    height: 44px;
    border: 2px solid #929294;
    border-radius: 8px;
    background: linear-gradient(#fff, #e4e4e5);
}

.config section + section {
    margin-top: 22px;
}

.props {
    width: 100%;
    border: 2px solid #e3e3e3;
    border-spacing: 0;
}

.props th,
.props td {
    height: 52px;
    border: solid #e3e3e3;
    border-width: 2px 0;
    vertical-align: top;
}

.props th {
    width: 182px;
    padding: 7px 0 0 14px;
    border-left-width: 2px;
    background: #e4eff6 padding-box;
    color: #4a4a4a;
    font-weight: normal;
    text-align: left;
}

.props.dynamic th {
    width: 162px;
}

.props td {
    padding: 7px 10px 0;
    border-right-width: 2px;
}

.props tr:last-child th,
.props tr:last-child td {
    height: 48px;
    border: none;
}

.props tr.tall:last-child th {
    height: 96px;
}

/* last row has no inner border, so its label fill stops one border earlier */
.props tr:last-child th {
    border-right: 2px solid #fff;
}

.disabled {
    width: 28px;
    height: 28px;
}

/* sidebar */
.sidebar {
    flex: none;
    width: 440px;
    background: #e7e8ed;
}

.sidebar .panel-head {
    justify-content: flex-end;
    padding-right: 2px;
}

.portlets {
    display: flex;
    flex-direction: column;
    gap: 10px;
    padding: 10px 4px;
}

.portlet {
    overflow: hidden;
    border: 2px solid #a9a9ab;
    border-radius: 16px;
    background: #e7e8ed;
}

.portlet-head {
    display: flex;
    align-items: center;
    height: 50px;
    padding: 0 12px 0 18px;
    border-bottom: 2px solid #98989a;
    background: linear-gradient(#dfe0e4, #b9babe);
}

.portlet-head .pic {
    width: 30px;
    height: 32px;
    margin: 0 14px 0 16px;
}

.portlet-head h3 {
    flex: 1;
    font-size: 24px;
}

.portlet-head button svg {
    width: 20px;
    height: 18px;
}

.portlet-tabs {
    display: flex;
    align-items: flex-end;
    height: 62px;
    padding-left: 10px;
    border-bottom: 2px solid #b0b1b4;
    background: #dbdce0;
}

.alarms .portlet-tabs {
    height: 58px;
}

.portlet-tabs button {
    height: 50px;
    padding: 0 41px 0;
}

.alarms .portlet-tabs button {
    padding: 0 22px 0;
}

.portlet-tabs button.on {
    width: 91px;
    margin-bottom: -2px;
    padding: 0;
    border: 2px solid #9a9a9c;
    border-bottom: none;
    border-radius: 10px 10px 0 0;
    background: #e7e8ed;
}

.alarms .portlet-tabs button.on {
    width: 134px;
    padding: 0;
}

.portlet .list {
    background: #fff;
}

.tasks .list {
    height: 352px;
}

.work .list {
    height: 206px;
}

.alarms .list {
    height: 328px;
    background: repeating-linear-gradient(#e7e8ed 0 45px, #eff0f3 45px 47px);
}

.task-filter {
    display: flex;
    justify-content: space-between;
    height: 40px;
    padding: 3px 8px 0 6px;
    background: #dbdce0;
}

.task-filter label {
    display: flex;
    align-items: center;
    gap: 14px;
    height: 28px;
}

.task-filter select {
    appearance: none;
}

.task-filter a {
    color: #33669c;
}

.portlet-foot {
    display: flex;
    align-items: flex-end;
    justify-content: flex-end;
    height: 16px;
    padding: 0 2px 1px 0;
}

.grip {
    width: 20px;
    height: 20px;
}

/* taskbar */
.taskbar {
    position: relative;
    display: flex;
    flex: none;
    gap: 2px;
    height: 13px;
    overflow: hidden;
    background: #565656;
}

.wallpaper {
    position: absolute;
    width: 100%;
    height: 100%;
}

.task {
    position: relative;
    width: 199px;
    height: 14px;
    padding-left: 14px;
    border: 1px solid #a0a0a0;
    background: rgba(160, 160, 160, 0.5);
}

.task.plain {
    width: 96px;
    padding-left: 34px;
    border-color: transparent;
    background: none;
}

.task.store {
    width: 102px;
    padding-left: 21px;
}

.task.lit {
    border-color: #fff;
    background: rgba(200, 200, 200, 0.6);
}

.task.violet {
    border-color: #6a6ac0;
    background: rgba(130, 130, 190, 0.6);
}

.task svg {
    width: 40px;
    height: 14px;
}

.task.store svg,
.task .square {
    width: 60px;
}
```
